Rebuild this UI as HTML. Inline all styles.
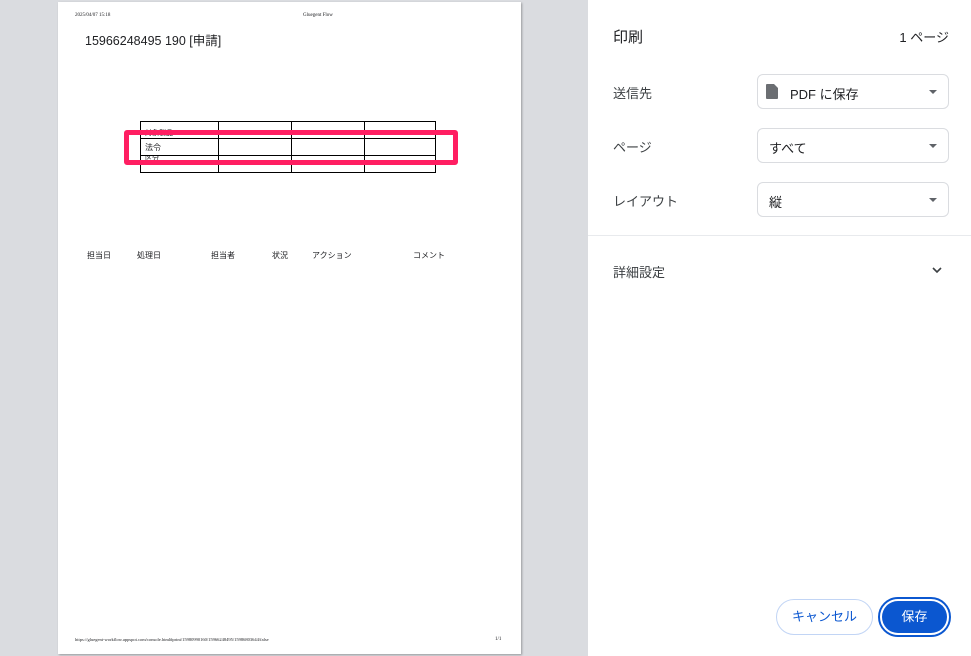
<!DOCTYPE html>
<html><head><meta charset="utf-8"><style>
*{margin:0;padding:0;box-sizing:border-box}
body{width:971px;height:656px;overflow:hidden;background:#dadce0;font-family:"Liberation Sans","Noto Sans CJK JP",sans-serif;position:relative;color:#202124}
.a{position:absolute;white-space:nowrap}
#page{position:absolute;left:58px;top:2px;width:463px;height:652px;background:#fff;box-shadow:1px 1px 2px rgba(0,0,0,.3)}
#panel{position:absolute;left:588px;top:0;width:383px;height:656px;background:#fff}
.sel{position:absolute;left:169px;width:192px;height:35px;border:1px solid #dadce0;border-radius:6px;font-size:13px}
.sel span{position:absolute;left:11px;top:9px}
.sel i{position:absolute;right:11px;top:15px;width:0;height:0;border-left:4px solid transparent;border-right:4px solid transparent;border-top:4px solid #5f6368}
.lbl{position:absolute;left:25px;font-size:13px;color:#3c4043}
td{border:1px solid #000;height:17px;font-size:8px;padding-left:4px}
</style></head><body>
<div id="page">
<div class="a" style="left:17px;top:11px;font-size:5px;font-family:'Liberation Serif',serif">2025/04/07 15:18</div>
<div class="a" style="left:245px;top:11px;font-size:5px;font-family:'Liberation Serif',serif">Gluegent Flow</div>
<div class="a" style="left:27px;top:28px;font-size:12.5px">15966248495 190 [申請]</div>
<table style="position:absolute;left:82px;top:119px;border-collapse:collapse;width:296px">
<tr><td style="width:78px;font-size:7px;overflow:hidden;vertical-align:bottom;line-height:8px">対象製品</td><td style="width:73px"></td><td style="width:73px"></td><td></td></tr>
<tr><td>法令</td><td></td><td></td><td></td></tr>
<tr><td style="font-size:7px;vertical-align:top;line-height:6px;overflow:hidden">区分</td><td></td><td></td><td></td></tr>
</table>
<div style="position:absolute;left:66px;top:128px;width:334px;height:35px;border:5px solid #ff1e62;border-radius:3px"></div>
<div class="a" style="left:29px;top:248px;font-size:8px">担当日</div>
<div class="a" style="left:79px;top:248px;font-size:8px">処理日</div>
<div class="a" style="left:153px;top:248px;font-size:8px">担当者</div>
<div class="a" style="left:214px;top:248px;font-size:8px">状況</div>
<div class="a" style="left:254px;top:248px;font-size:8px">アクション</div>
<div class="a" style="left:355px;top:248px;font-size:8px">コメント</div>
<div class="a" style="left:17px;top:635px;font-size:4.5px;font-family:'Liberation Serif',serif">https://gluegent-workflow.appspot.com/console.html#print/15980990160/15966248495/15986803644/false</div>
<div class="a" style="left:437px;top:635px;font-size:5px;font-family:'Liberation Serif',serif">1/1</div>
</div>
<div id="panel">
<div class="a" style="left:25px;top:26px;font-size:15px">印刷</div>
<div class="a" style="right:22px;top:27px;font-size:13px">1 ページ</div>
<div class="lbl" style="top:83px">送信先</div>
<div class="lbl" style="top:137px">ページ</div>
<div class="lbl" style="top:191px">レイアウト</div>
<div class="sel" style="top:74px"><svg style="position:absolute;left:8px;top:9px" width="12" height="15" viewBox="0 0 12 15"><path d="M1 0h7l4 4v10a1 1 0 0 1-1 1H1a1 1 0 0 1-1-1V1a1 1 0 0 1 1-1z" fill="#6b6e72"/></svg><span style="left:32px">PDF に保存</span><i></i></div>
<div class="sel" style="top:128px"><span>すべて</span><i></i></div>
<div class="sel" style="top:182px"><span>縦</span><i></i></div>
<div style="position:absolute;left:0;top:235px;width:383px;height:1px;background:#e8eaed"></div>
<div class="lbl" style="top:262px">詳細設定</div>
<svg style="position:absolute;left:344px;top:267px" width="10" height="7" viewBox="0 0 10 7"><path d="M1 1l4 4 4-4" fill="none" stroke="#3c4043" stroke-width="1.6"/></svg>
<div style="position:absolute;left:188px;top:599px;width:97px;height:36px;border:1px solid #c2d5f5;border-radius:18px;color:#0b57d0;font-size:13px;text-align:center;line-height:34px">キャンセル</div>
<div style="position:absolute;left:290px;top:597px;width:73px;height:40px;border:2px solid #0b57d0;border-radius:20px;padding:2px"><div style="width:100%;height:100%;background:#0b57d0;border-radius:16px;color:#fff;font-size:13px;text-align:center;line-height:32px">保存</div></div>
</div>
</body></html>
